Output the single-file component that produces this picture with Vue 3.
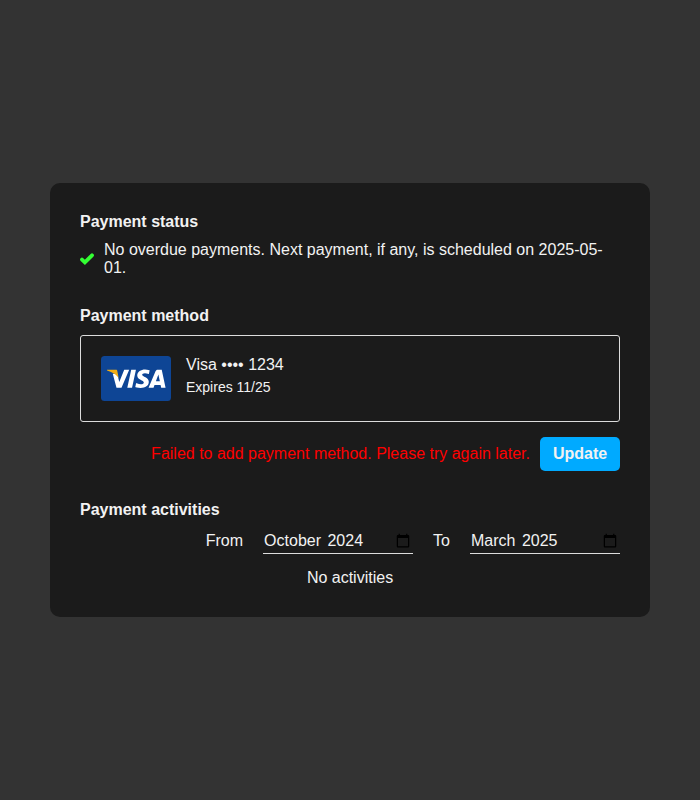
<script setup>
import { ref } from 'vue'

const fields = ref([
  { id: 'from', label: 'From', value: '2024-10' },
  { id: 'to', label: 'To', value: '2025-03' },
])

const months = [
  'January', 'February', 'March', 'April', 'May', 'June', 'July',
  'August', 'September', 'October', 'November', 'December',
]
const monthName = (value) => months[Number(value.slice(5)) - 1]
const year = (value) => value.slice(0, 4)
</script>

<template>
  <main class="page">
    <div class="card">
      <section>
        <h2>Payment status</h2>
        <div class="status">
          <svg class="check" viewBox="0 0 14 14" aria-hidden="true">
            <path d="M2 7.6 4.9 10.4 12 3.3" />
          </svg>
          <span>No overdue payments. Next payment, if any, is scheduled on 2025-05-01.</span>
        </div>
      </section>

      <section>
        <h2>Payment method</h2>
        <div class="method">
          <svg class="logo" viewBox="0 0 70 45" role="img" aria-label="Visa">
            <rect width="70" height="45" rx="3.5" fill="#0e4595" />
            <g transform="translate(5.9 13.4) scale(.0587 .0575)">
              <path fill="#fff" d="M651.19.5c-70.93 0-134.32 36.77-134.32 104.69 0 77.9 112.42 83.28 112.42 122.42 0 16.48-18.88 31.23-51.14 31.23-45.77 0-79.98-20.61-79.98-20.61l-14.64 68.55s39.41 17.41 91.73 17.41c77.55 0 138.58-38.57 138.58-107.66 0-82.32-112.89-87.54-112.89-123.86 0-12.91 15.5-27.05 47.66-27.05 36.29 0 65.89 14.99 65.89 14.99l14.33-66.2S696.61.5 651.18.5zM99.84 74.2 163.35 319.03h85.14L379.93 5.5h-84.94l-84.28 213.17-34.39-144.7zM414.08 5.5l-66.63 313.53h81L494.85 5.5zm451.76 0c-19.53 0-29.88 10.46-37.47 28.73L709.7 319.03h84.94l16.43-47.47h103.48l9.99 47.47h74.95L934.12 5.5zm11.05 84.71 25.18 117.65h-67.45z" />
              <path fill="#f2ae14" d="M2 5.5h155c12 0 18 8 21 28l23 122C181 119 150 89 111 67 78 45 42 30 2 18z" />
            </g>
          </svg>
          <div class="details">
            <div>Visa •••• 1234</div>
            <div class="expires">Expires 11/25</div>
          </div>
        </div>
        <div class="actions">
          <span class="error">Failed to add payment method. Please try again later.</span>
          <button type="button">Update</button>
        </div>
      </section>

      <section>
        <h2>Payment activities</h2>
        <div class="range">
          <template v-for="field in fields" :key="field.id">
            <label :for="field.id">{{ field.label }}</label>
            <div class="month">
              <input :id="field.id" v-model="field.value" type="month" />
              <div class="value">
                <span>{{ monthName(field.value) }}</span>
                <span>{{ year(field.value) }}</span>
              </div>
            </div>
          </template>
        </div>
        <div class="empty">No activities</div>
      </section>
    </div>
  </main>
</template>

<style>
body {
  background: #333;
}
</style>

<style scoped>
.page {
  min-height: 100vh;
  display: flex;
  align-items: center;
  justify-content: center;
  color: #f2f2f2;
  font: 16px "Liberation Sans", Arial, sans-serif;
}
.card {
  box-sizing: border-box;
  width: 600px;
  padding: 30px;
  display: flex;
  flex-direction: column;
  gap: 30px;
  border-radius: 10px;
  background: #1b1b1b;
}
h2 {
  margin: 0 0 10px;
  font-size: 16px;
  font-weight: bold;
}
.status {
  display: flex;
  align-items: center;
  gap: 10px;
}
.check {
  flex: none;
  width: 14px;
  height: 14px;
  fill: none;
  stroke: #3f3;
  stroke-width: 3.8;
  stroke-linecap: round;
}
.method {
  display: flex;
  gap: 15px;
  padding: 20px;
  border: 1px solid #ddd;
  border-radius: 3px;
}
.logo {
  display: block;
  width: 70px;
  height: 45px;
}
.expires {
  margin-top: 5px;
  font-size: 14px;
}
.actions {
  display: flex;
  align-items: center;
  justify-content: flex-end;
  gap: 10px;
  margin-top: 15px;
}
.error {
  color: #f00;
}
button {
  box-sizing: border-box;
  width: 80px;
  height: 34px;
  padding: 0;
  border: 0;
  border-radius: 5px;
  background: #0af;
  color: #f2f2f2;
  font: inherit;
  font-weight: bold;
}
.range {
  display: flex;
  align-items: baseline;
  justify-content: flex-end;
  gap: 20px;
}
.month {
  display: grid;
  width: 150px;
}
/* The month is spelled out in the same cell, over the picker's own digits. */
.month > * {
  grid-area: 1 / 1;
}
input {
  box-sizing: border-box;
  width: 100%;
  height: 25px;
  padding: 0;
  border: 0;
  border-bottom: 1px solid #ddd;
  background: transparent;
  color: inherit;
  font: inherit;
  outline: none;
}
input::-webkit-datetime-edit {
  visibility: hidden;
}
.value {
  display: flex;
  gap: 4.45px;
  padding-top: 3px;
  line-height: 18px;
  pointer-events: none;
}
.value span {
  padding: 0 1px;
}
.empty {
  margin-top: 15px;
  text-align: center;
}
</style>
